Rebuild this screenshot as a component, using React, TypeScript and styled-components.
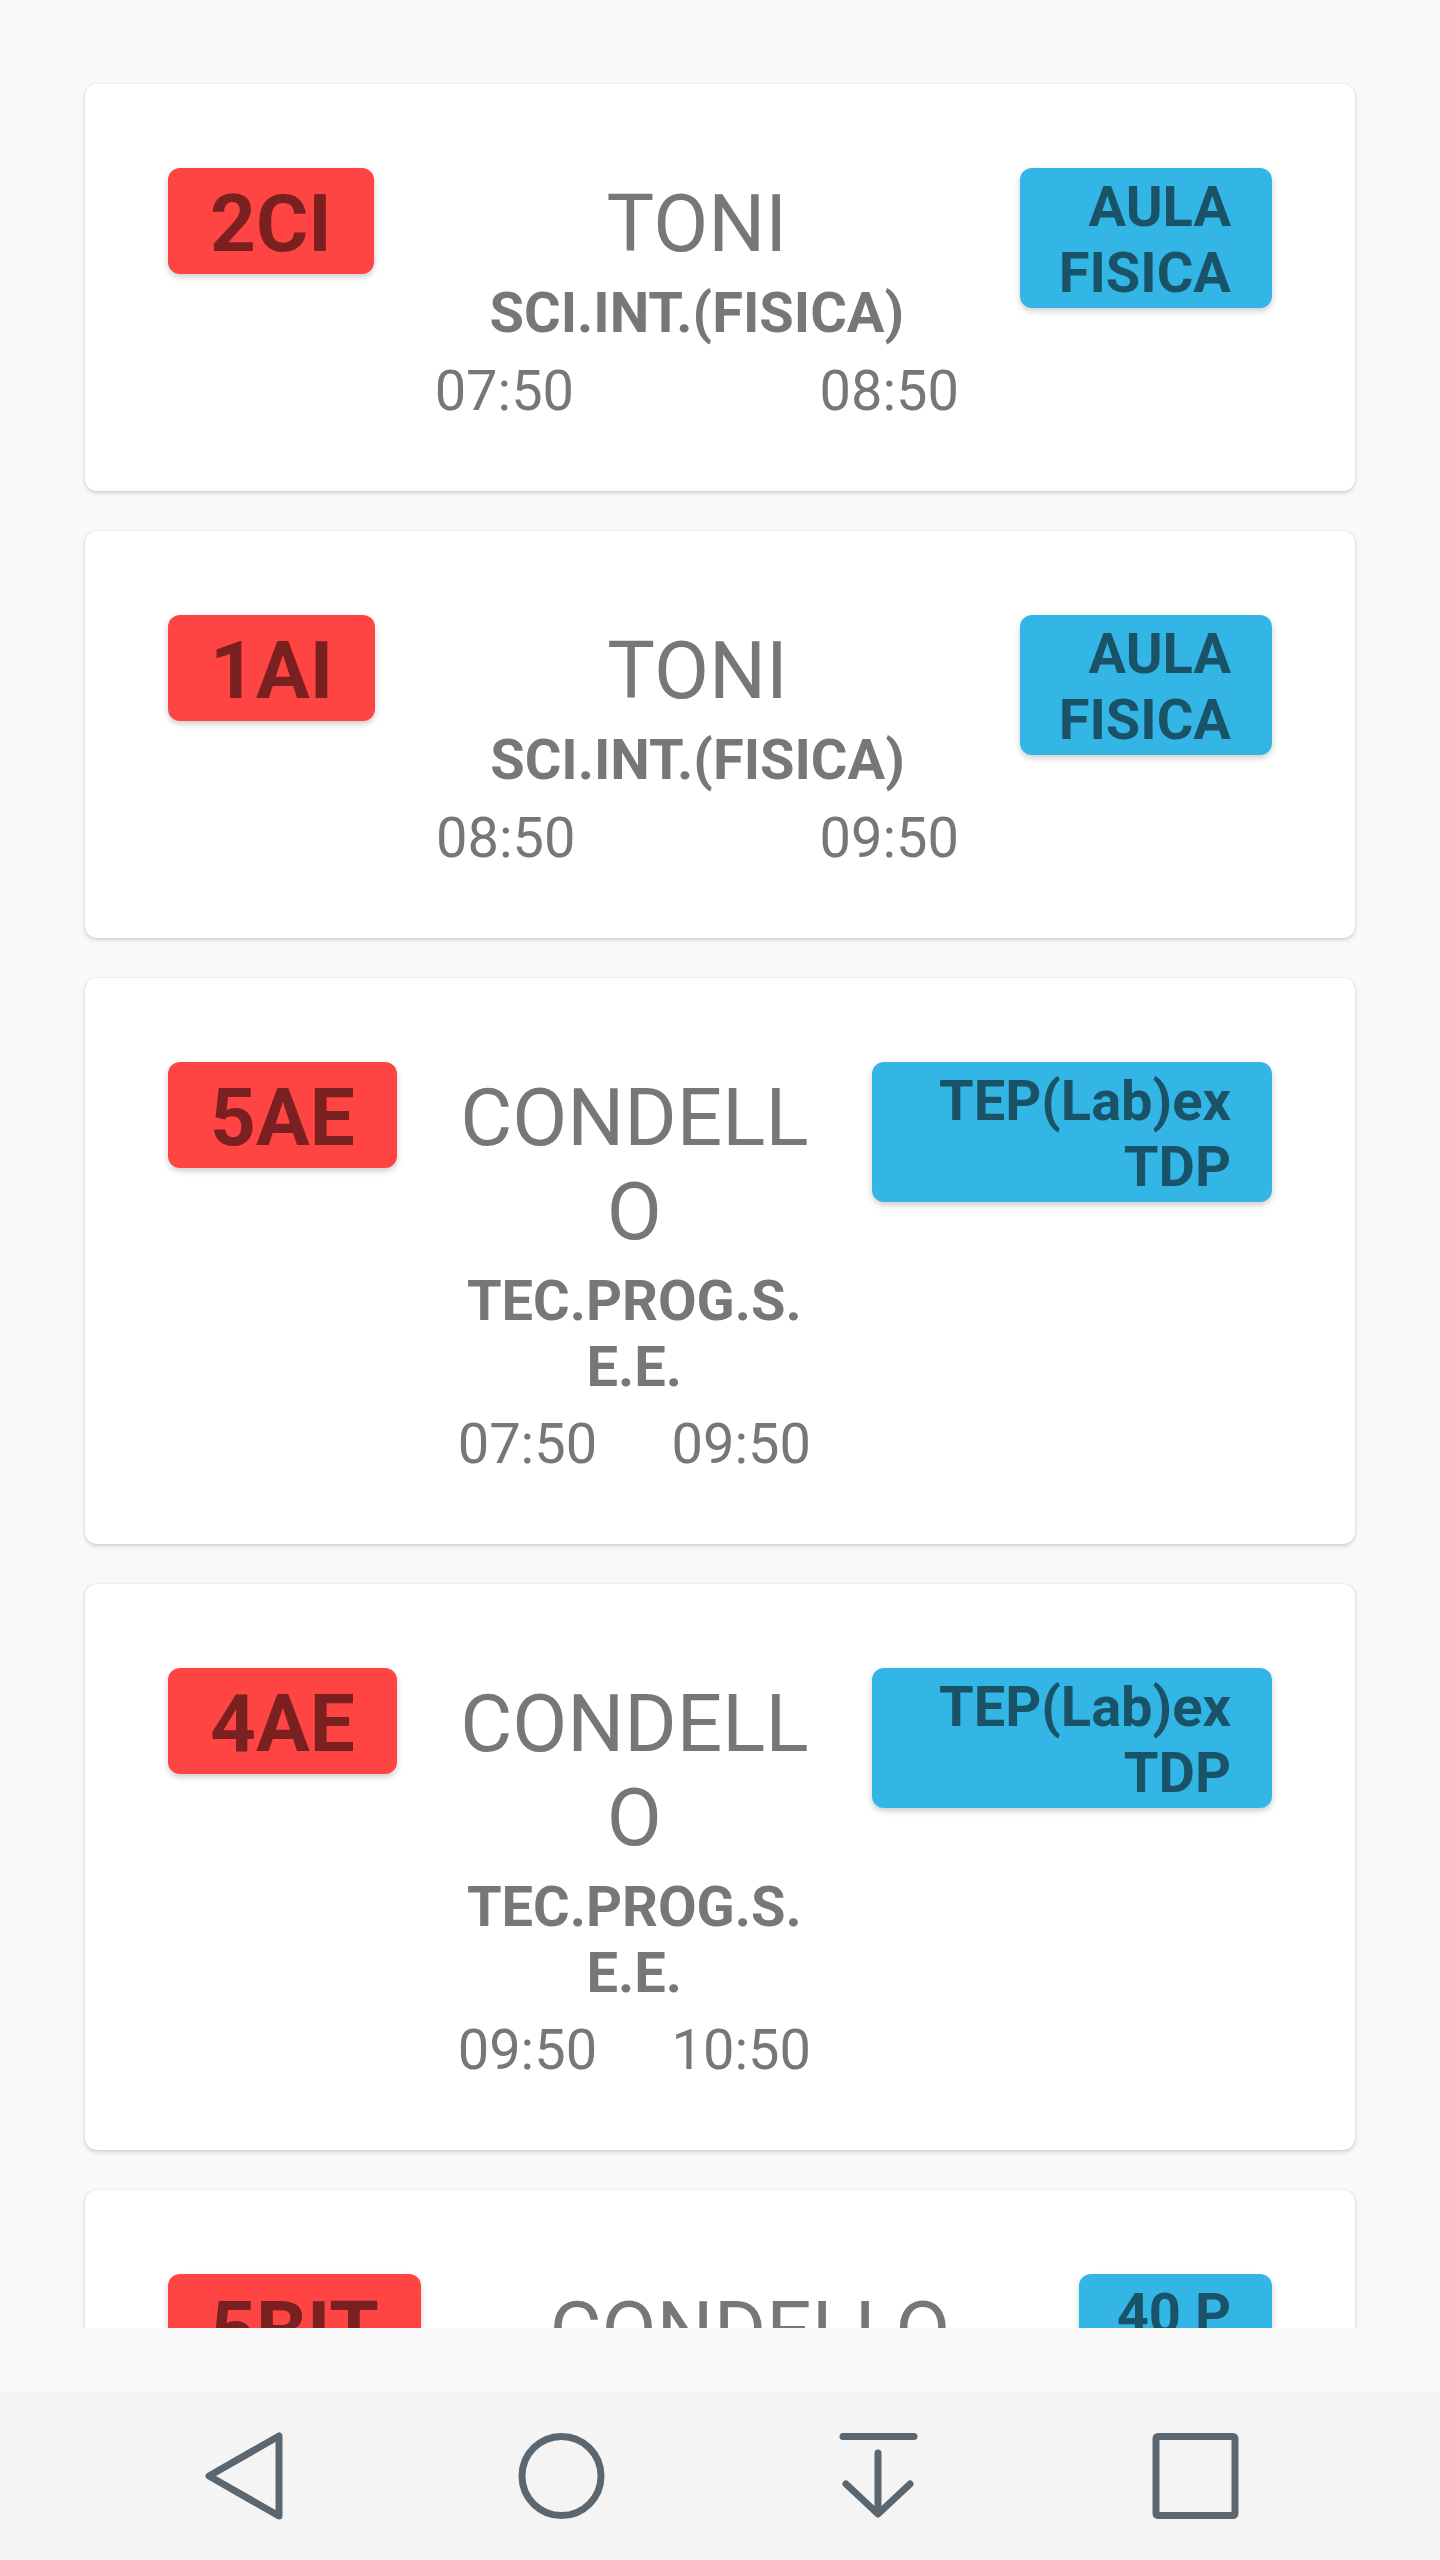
import React from "react";
import styled, { createGlobalStyle } from "styled-components";

const GlobalStyle = createGlobalStyle`
  html, body {
    margin: 0;
    padding: 0;
    background: #f9f9f9;
    font-family: Roboto, "Noto Sans", "Liberation Sans", sans-serif;
  }
  * { box-sizing: border-box; }
`;

const Screen = styled.div`
  width: 1440px;
  height: 2560px;
  display: flex;
  flex-direction: column;
  background: #f9f9f9;
  overflow: hidden;
`;

const List = styled.div`
  height: 2328px;
  flex: none;
  overflow: hidden;
  display: flex;
  flex-direction: column;
  gap: 40px;
  padding: 84px 85px 0;
`;

const Card = styled.div`
  flex: none;
  display: flex;
  align-items: flex-start;
  background: #ffffff;
  border-radius: 12px;
  padding: 84px 83px 65px;
  box-shadow: 0 2px 4px rgba(0, 0, 0, 0.16), 0 0 2px rgba(0, 0, 0, 0.1);
`;

const ClassBadge = styled.div`
  flex: none;
  background: #ff4444;
  color: #7a2020;
  font-weight: 700;
  font-size: 80px;
  line-height: 1.172;
  padding: 0.129em 42px 0.027em;
  border-radius: 12px;
  white-space: nowrap;
  box-shadow: 0 3px 6px rgba(0, 0, 0, 0.2);
`;

const RoomBadge = styled.div<{ $width: number }>`
  flex: none;
  width: ${(p) => p.$width}px;
  background: #33b5e5;
  color: #1a5368;
  font-weight: 700;
  font-size: 56px;
  line-height: 1.172;
  padding: 0.129em 41px 0.027em 20px;
  border-radius: 12px;
  text-align: right;
  box-shadow: 0 3px 6px rgba(0, 0, 0, 0.2);
`;

const RoomLine = styled.div`
  white-space: nowrap;
`;

const Center = styled.div`
  flex: 1 1 0;
  min-width: 0;
  padding: 0 61px;
  display: flex;
  flex-direction: column;
  align-items: stretch;
  text-align: center;
  color: #777777;
`;

const Teacher = styled.div`
  font-size: 80px;
  font-weight: 400;
  line-height: 1.172;
  padding: 0.129em 0 0.027em;
  word-break: break-all;
`;

const Subject = styled.div`
  font-size: 56px;
  font-weight: 700;
  line-height: 1.172;
  padding: 0.129em 0 0.027em;
  word-break: break-all;
`;

const Times = styled.div`
  display: flex;
  justify-content: space-between;
  font-size: 56px;
  font-weight: 400;
  line-height: 1.172;
  padding: calc(0.129em + 3px) 0 0.027em;
`;

const Spacer = styled.div`
  height: 64px;
  flex: none;
  background: #f9f9f9;
`;

const NavBar = styled.div`
  height: 168px;
  flex: none;
  background: #f4f4f4;
  display: flex;
  justify-content: center;
  align-items: center;
`;

const NavItem = styled.div`
  width: 317px;
  height: 168px;
  display: flex;
  justify-content: center;
  align-items: center;
`;

const Icon = styled.svg`
  width: 96px;
  height: 96px;
  display: block;
  fill: none;
  stroke: #5b6770;
  stroke-width: 7;
  stroke-linecap: round;
  stroke-linejoin: round;
`;

type Lesson = {
  cls: string;
  teacher: string;
  subject: string;
  start: string;
  end: string;
  room: string[];
  roomWidth: number;
};

const lessons: Lesson[] = [
  { cls: "2CI", teacher: "TONI", subject: "SCI.INT.(FISICA)", start: "07:50", end: "08:50", room: ["AULA", "FISICA"], roomWidth: 252 },
  { cls: "1AI", teacher: "TONI", subject: "SCI.INT.(FISICA)", start: "08:50", end: "09:50", room: ["AULA", "FISICA"], roomWidth: 252 },
  { cls: "5AE", teacher: "CONDELLO", subject: "TEC.PROG.S.E.E.", start: "07:50", end: "09:50", room: ["TEP(Lab)ex", "TDP"], roomWidth: 400 },
  { cls: "4AE", teacher: "CONDELLO", subject: "TEC.PROG.S.E.E.", start: "09:50", end: "10:50", room: ["TEP(Lab)ex", "TDP"], roomWidth: 400 },
  { cls: "5BIT", teacher: "CONDELLO", subject: "TEC.PROG.S.E.E.", start: "10:50", end: "11:50", room: ["40 P"], roomWidth: 193 },
];

function LessonCard({ l }: { l: Lesson }) {
  return (
    <Card>
      <ClassBadge>{l.cls}</ClassBadge>
      <Center>
        <Teacher>{l.teacher}</Teacher>
        <Subject>{l.subject}</Subject>
        <Times>
          <span>{l.start}</span>
          <span>{l.end}</span>
        </Times>
      </Center>
      <RoomBadge $width={l.roomWidth}>
        {l.room.map((r) => (
          <RoomLine key={r}>{r}</RoomLine>
        ))}
      </RoomBadge>
    </Card>
  );
}

export default function App() {
  return (
    <>
      <GlobalStyle />
      <Screen>
        <List>
          {lessons.map((l, i) => (
            <LessonCard key={i} l={l} />
          ))}
        </List>
        <Spacer />
        <NavBar>
          <NavItem>
            <Icon viewBox="0 0 96 96">
              <polygon points="12,48 82,8 82,88" />
            </Icon>
          </NavItem>
          <NavItem>
            <Icon viewBox="0 0 96 96">
              <circle cx="47.5" cy="48" r="39.5" />
            </Icon>
          </NavItem>
          <NavItem>
            <Icon viewBox="0 0 96 96">
              <line x1="12" y1="8.5" x2="83" y2="8.5" />
              <line x1="47" y1="25" x2="47" y2="85" />
              <polyline points="15,56 47,86 79,56" />
            </Icon>
          </NavItem>
          <NavItem>
            <Icon viewBox="0 0 96 96">
              <rect x="8" y="8.5" width="79" height="79" rx="2" />
            </Icon>
          </NavItem>
        </NavBar>
      </Screen>
    </>
  );
}
